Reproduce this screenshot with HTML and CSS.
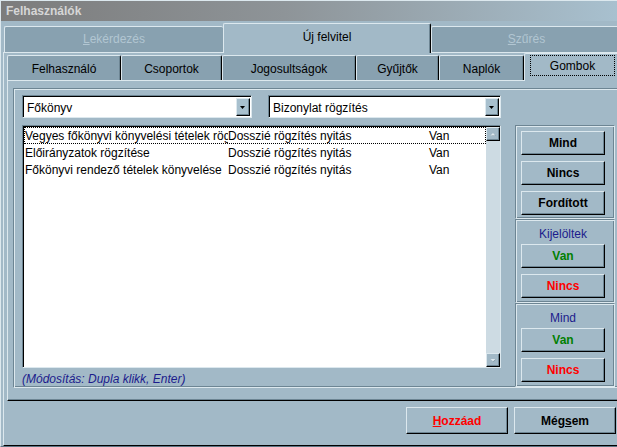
FILE: index.html
```html
<!DOCTYPE html>
<html lang="hu">
<head>
<meta charset="utf-8">
<title>Felhasználók</title>
<link rel="stylesheet" href="styles.css">
</head>
<body>
<div class="window">
  <div class="titlebar">Felhasználók</div>
  <div class="outer-tabs">
    <div class="otab disabled w-lek"><span><u>L</u>ekérdezés</span></div>
    <div class="otab selected w-uj"><span>Új felvitel</span></div>
    <div class="otab disabled w-szu"><span><u>S</u>zűrés</span></div>
  </div>
  <div class="outer-page">
    <div class="inner-tabs">
      <div class="itab w-felh">Felhasználó</div>
      <div class="itab w-csop">Csoportok</div>
      <div class="itab w-jog">Jogosultságok</div>
      <div class="itab w-gyu">Gyűjtők</div>
      <div class="itab w-nap">Naplók</div>
      <div class="itab selected w-gomb"><span class="focus">Gombok</span></div>
    </div>
    <div class="inner-page">
      <div class="group">
        <div class="left-col">
          <div class="combos">
            <div class="combo w-c1"><span class="combo-text">Főkönyv</span><span class="combo-btn"><svg width="5" height="3" viewBox="0 0 5 3"><polygon points="0,0 5,0 2.5,3" fill="#000"/></svg></span></div>
            <div class="combo w-c2"><span class="combo-text">Bizonylat rögzítés</span><span class="combo-btn"><svg width="5" height="3" viewBox="0 0 5 3"><polygon points="0,0 5,0 2.5,3" fill="#000"/></svg></span></div>
          </div>
          <div class="list">
            <div class="rows">
              <div class="row focused"><span class="c1">Vegyes főkönyvi könyvelési tételek rögzítése</span><span class="c2">Dosszié rögzítés nyitás</span><span class="c3">Van</span></div>
              <div class="row"><span class="c1">Előirányzatok rögzítése</span><span class="c2">Dosszié rögzítés nyitás</span><span class="c3">Van</span></div>
              <div class="row"><span class="c1">Főkönyvi rendező tételek könyvelése</span><span class="c2">Dosszié rögzítés nyitás</span><span class="c3">Van</span></div>
            </div>
            <div class="scrollbar">
              <span class="sb-btn"><svg width="7" height="5" viewBox="0 0 7 5"><polygon points="1,4 6,4 3.5,1.5" fill="#7d94a3"/><polygon points="0.5,3.5 5.5,3.5 3,1" fill="#dfe9ef"/></svg></span>
              <span class="sb-track"></span>
              <span class="sb-btn"><svg width="7" height="5" viewBox="0 0 7 5"><polygon points="1,1.5 6,1.5 3.5,4" fill="#7d94a3"/><polygon points="0.5,1 5.5,1 3,3.5" fill="#dfe9ef"/></svg></span>
            </div>
          </div>
          <div class="hint">(Módosítás: Dupla klikk, Enter)</div>
        </div>
        <div class="right-col">
          <div class="section s1">
            <button class="btn">Mind</button>
            <button class="btn">Nincs</button>
            <button class="btn">Fordított</button>
          </div>
          <div class="section">
            <div class="sec-label">Kijelöltek</div>
            <button class="btn green">Van</button>
            <button class="btn red">Nincs</button>
          </div>
          <div class="section">
            <div class="sec-label">Mind</div>
            <button class="btn green">Van</button>
            <button class="btn red">Nincs</button>
          </div>
        </div>
      </div>
    </div>
    <div class="footer">
      <button class="btn big red"><u>H</u>ozzáad</button>
      <button class="btn big">Még<u>s</u>em</button>
    </div>
  </div>
</div>
</body>
</html>
```
FILE: styles.css
```css
* { box-sizing: border-box; }
html, body { margin: 0; padding: 0; }
body {
  width: 617px;
  height: 447px;
  overflow: hidden;
  background: #a2b9c7;
  font-family: "Liberation Sans", Arial, sans-serif;
  font-size: 12px;
  color: #000;
}
.window {
  width: 630px;
  height: 447px;
  border-top: 1px solid #dce8ee;
  border-left: 1px solid #dce8ee;
  border-bottom: 1px solid #5d7584;
  display: flex;
  flex-direction: column;
  background: #a2b9c7;
}
.titlebar {
  height: 20px;
  flex: none;
  background: linear-gradient(to right, #7c7c7c 0%, #8e9498 45%, #a9c2d1 100%);
  color: #d6d6d6;
  font-weight: bold;
  line-height: 21px;
  padding-left: 5px;
}
.outer-tabs {
  height: 31px;
  flex: none;
  display: flex;
  align-items: flex-end;
  padding-left: 3px;
}
.otab {
  height: 26px;
  background: #88a1b0;
  border-top: 1px solid #dce8ee;
  border-left: 1px solid #dce8ee;
  border-top-left-radius: 2px;
  border-top-right-radius: 2px;
  display: flex;
  align-items: center;
  justify-content: center;
  padding-bottom: 1px;
}
.otab.disabled { color: #b2c6d2; }
.otab.selected {
  height: 30px;
  margin-bottom: -1px;
  background: #a2b9c7;
  border-right: 1px solid #000;
  box-shadow: inset -1px 0 #6d8593;
  position: relative;
  z-index: 1;
  padding-bottom: 3px;
}
.w-lek { width: 219px; }
.w-uj { width: 208px; }
.w-szu { width: 190px; }

.outer-page {
  height: 394px;
  flex: none;
  margin-left: 2px;
  border-top: 1px solid #dce8ee;
  border-left: 1px solid #dce8ee;
  border-right: 1px solid #000;
  border-bottom: 1px solid #000;
  display: flex;
  flex-direction: column;
}
.inner-tabs {
  height: 27px;
  flex: none;
  display: flex;
  align-items: flex-end;
  padding-left: 3px;
}
.itab {
  height: 25px;
  background: #88a1b0;
  border-top: 1px solid #dce8ee;
  border-left: 1px solid #dce8ee;
  border-right: 1px solid #000;
  box-shadow: inset -1px 0 #6d8593;
  border-top-left-radius: 2px;
  border-top-right-radius: 2px;
  display: flex;
  align-items: center;
  justify-content: center;
  padding-top: 2px;
}
.itab.selected {
  height: 28px;
  margin-bottom: -1px;
  background: #a2b9c7;
  position: relative;
  z-index: 1;
  align-items: flex-start;
  padding: 1px 8px 0 5px;
}
.focus {
  flex: 1;
  height: 21px;
  outline: 1px dotted #000;
  outline-offset: -1px;
  display: flex;
  align-items: center;
  justify-content: center;
}
.w-felh { width: 114px; }
.w-csop { width: 101px; }
.w-jog { width: 134px; }
.w-gyu { width: 83px; }
.w-nap { width: 85px; }
.w-gomb { width: 100px; }

.inner-page {
  height: 321px;
  flex: none;
  margin: 0 4px 0 3px;
  border-top: 1px solid #dce8ee;
  border-left: 1px solid #dce8ee;
  border-right: 1px solid #000;
  border-bottom: 1px solid #000;
  box-shadow: inset -1px -1px #6d8593;
  padding: 7px 3px 0 5px;
}
.group {
  height: 300px;
  border: 1px solid;
  border-color: #6d8593 #dce8ee #dce8ee #6d8593;
  box-shadow: inset 1px 1px #dce8ee, inset -1px -1px #6d8593;
  display: flex;
  padding: 6px 0 0 8px;
}
.left-col {
  width: 479px;
  display: flex;
  flex-direction: column;
}
.combos {
  display: flex;
  gap: 16px;
  height: 23px;
  flex: none;
}
.combo {
  height: 23px;
  background: #fff;
  border: 1px solid;
  border-color: #6d8593 #dce8ee #dce8ee #6d8593;
  box-shadow: inset 1px 1px #000;
  display: flex;
  align-items: center;
  padding: 2px 1px 1px 4px;
}
.w-c1 { width: 230px; }
.w-c2 { width: 233px; }
.combo-text { flex: 1; padding-top: 1px; }
.combo-btn {
  width: 14px;
  height: 18px;
  background: #a8c0ce;
  border: 1px solid;
  border-color: #dce8ee #000 #000 #dce8ee;
  box-shadow: inset -1px -1px #6d8593;
  display: flex;
  align-items: center;
  justify-content: center;
  padding-right: 1px;
}
.list {
  height: 243px;
  flex: none;
  margin-top: 7px;
  background: #fff;
  border: 1px solid;
  border-color: #6d8593 #dce8ee #dce8ee #6d8593;
  box-shadow: inset 1px 1px #000;
  padding: 1px 0 0 1px;
  display: flex;
}
.rows { flex: 1; }
.row {
  height: 17px;
  display: flex;
  align-items: center;
  white-space: nowrap;
  padding-left: 1px;
}
.row.focused {
  outline: 1px dotted #000;
  outline-offset: -1px;
}
.c1 { width: 203px; overflow: hidden; }
.c2 { width: 201px; overflow: hidden; }
.c3 { flex: 1; }
.scrollbar {
  width: 14px;
  background: #cddbe3;
  display: flex;
  flex-direction: column;
}
.sb-btn {
  height: 14px;
  flex: none;
  background: #a2b9c7;
  border: 1px solid;
  border-color: #dce8ee #000 #000 #dce8ee;
  box-shadow: inset -1px -1px #6d8593;
  display: flex;
  align-items: center;
  justify-content: center;
}
.sb-track { flex: 1; }
.hint {
  padding-top: 4px;
  line-height: 15px;
  font-style: italic;
  color: #1c1c8c;
}
.right-col {
  width: 100px;
  margin: 30px 0 0 14px;
  display: flex;
  flex-direction: column;
}
.section {
  height: 84px;
  border: 1px solid;
  border-color: #6d8593 #dce8ee #dce8ee #6d8593;
  box-shadow: inset 1px 1px #dce8ee, inset -1px -1px #6d8593;
  display: flex;
  flex-direction: column;
  align-items: flex-start;
  padding: 5px 0 0 5px;
  gap: 6px;
}
.section.s1 { height: 94px; }
.sec-label {
  width: 84px;
  height: 19px;
  margin-bottom: -6px;
  text-align: center;
  color: #1c1c8c;
  line-height: 19px;
}
.btn {
  width: 84px;
  height: 24px;
  background: #a2b9c7;
  border: 1px solid;
  border-color: #dce8ee #000 #000 #dce8ee;
  box-shadow: inset -1px -1px #6d8593;
  font-family: "Liberation Sans", Arial, sans-serif;
  font-size: 12px;
  font-weight: bold;
  color: #000;
  padding: 0;
  margin: 0;
}
.btn.green { color: #008000; }
.btn.red { color: #ff0000; }
.footer {
  flex: 1;
  display: flex;
  justify-content: flex-end;
  align-items: flex-start;
  padding: 6px 13px 0 0;
  gap: 6px;
}
.btn.big {
  width: 102px;
  height: 27px;
}
```
